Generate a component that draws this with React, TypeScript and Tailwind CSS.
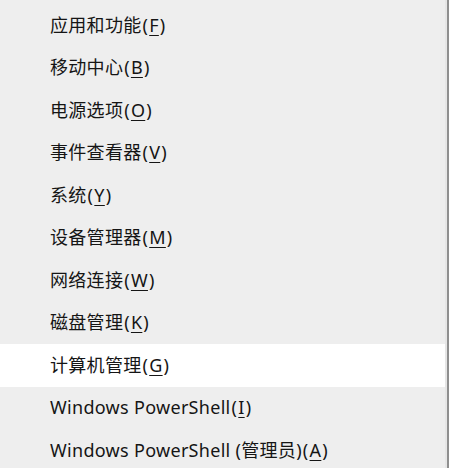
import React from "react";

const items: { label: string; key: string; active?: boolean }[] = [
  { label: "应用和功能", key: "F" },
  { label: "移动中心", key: "B" },
  { label: "电源选项", key: "O" },
  { label: "事件查看器", key: "V" },
  { label: "系统", key: "Y" },
  { label: "设备管理器", key: "M" },
  { label: "网络连接", key: "W" },
  { label: "磁盘管理", key: "K" },
  { label: "计算机管理", key: "G", active: true },
  { label: "Windows PowerShell", key: "I" },
  { label: "Windows PowerShell (管理员)", key: "A" },
];

export default function App() {
  return (
    <div
      className="w-[449px] h-[468px] overflow-hidden bg-[#eeeeee] flex"
      style={{ fontFamily: '"Noto Sans", "Noto Sans CJK SC", sans-serif' }}
    >
      <div className="w-[445px] flex flex-col pt-[4px]">
        {items.map((it) => (
          <div
            key={it.key}
            className={`h-[42.5px] shrink-0 flex items-center pl-[50px] text-[18px] tracking-[0.3px] text-[#151515] ${
              it.active ? "bg-white" : ""
            }`}
          >
            <span>
              {it.label}
              <span className="mx-[1px]">(</span>
              <span className="underline underline-offset-[3px] decoration-1">{it.key}</span>
              <span className="mx-[1px]">)</span>
            </span>
          </div>
        ))}
      </div>
      <div className="w-[2px] bg-[#e6e6e6]" />
      <div className="w-[2px] bg-[#8f8f8f]" />
    </div>
  );
}
